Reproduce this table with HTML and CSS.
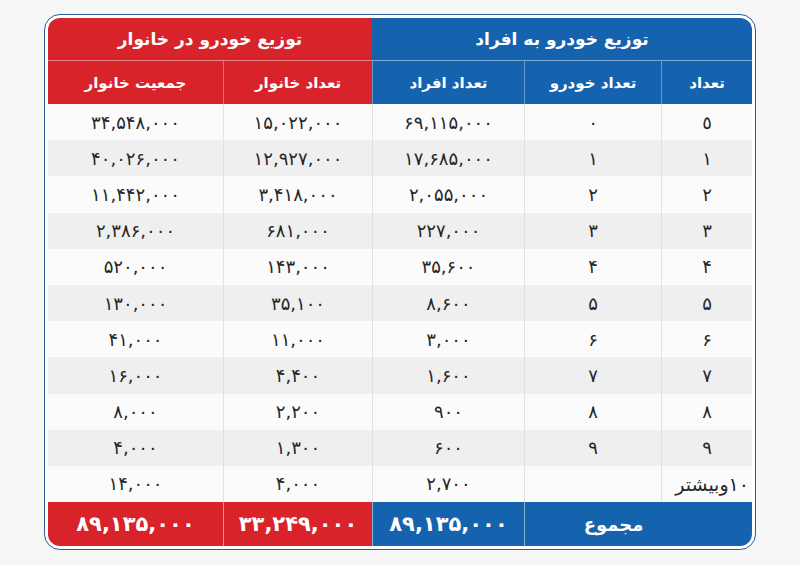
FILE: index.html
```html
<!DOCTYPE html>
<html lang="fa">
<head>
<meta charset="utf-8">
<link rel="stylesheet" href="styles.css">
</head>
<body>
<div class="card">
  <table class="grid" dir="rtl">
    <colgroup>
      <col class="c1"><col class="c2"><col class="c3"><col class="c4"><col class="c5">
    </colgroup>
    <thead>
      <tr class="h1">
        <th colspan="3" class="blue">توزیع خودرو به افراد</th>
        <th colspan="2" class="red">توزیع خودرو در خانوار</th>
      </tr>
      <tr class="h2">
        <th class="blue">تعداد</th>
        <th class="blue">تعداد خودرو</th>
        <th class="blue">تعداد افراد</th>
        <th class="red">تعداد خانوار</th>
        <th class="red">جمعیت خانوار</th>
      </tr>
    </thead>
    <tbody>
      <tr><td class="zero">٥</td><td>۰</td><td>۶۹,۱۱۵,۰۰۰</td><td>۱۵,۰۲۲,۰۰۰</td><td>۳۴,۵۴۸,۰۰۰</td></tr>
      <tr><td>۱</td><td>۱</td><td>۱۷,۶۸۵,۰۰۰</td><td>۱۲,۹۲۷,۰۰۰</td><td>۴۰,۰۲۶,۰۰۰</td></tr>
      <tr><td>۲</td><td>۲</td><td>۲,۰۵۵,۰۰۰</td><td>۳,۴۱۸,۰۰۰</td><td>۱۱,۴۴۲,۰۰۰</td></tr>
      <tr><td>۳</td><td>۳</td><td>۲۲۷,۰۰۰</td><td>۶۸۱,۰۰۰</td><td>۲,۳۸۶,۰۰۰</td></tr>
      <tr><td>۴</td><td>۴</td><td>۳۵,۶۰۰</td><td>۱۴۳,۰۰۰</td><td>۵۲۰,۰۰۰</td></tr>
      <tr><td>۵</td><td>۵</td><td>۸,۶۰۰</td><td>۳۵,۱۰۰</td><td>۱۳۰,۰۰۰</td></tr>
      <tr><td>۶</td><td>۶</td><td>۳,۰۰۰</td><td>۱۱,۰۰۰</td><td>۴۱,۰۰۰</td></tr>
      <tr><td>۷</td><td>۷</td><td>۱,۶۰۰</td><td>۴,۴۰۰</td><td>۱۶,۰۰۰</td></tr>
      <tr><td>۸</td><td>۸</td><td>۹۰۰</td><td>۲,۲۰۰</td><td>۸,۰۰۰</td></tr>
      <tr><td>۹</td><td>۹</td><td>۶۰۰</td><td>۱,۳۰۰</td><td>۴,۰۰۰</td></tr>
      <tr><td class="more">۱۰وبیشتر</td><td></td><td>۲,۷۰۰</td><td>۴,۰۰۰</td><td>۱۴,۰۰۰</td></tr>
    </tbody>
    <tfoot>
      <tr>
        <td colspan="2" class="blue label">مجموع</td>
        <td class="blue">۸۹,۱۳۵,۰۰۰</td>
        <td class="red">۳۳,۲۴۹,۰۰۰</td>
        <td class="red">۸۹,۱۳۵,۰۰۰</td>
      </tr>
    </tfoot>
  </table>
</div>
</body>
</html>
```
FILE: styles.css
```css
html, body {
  margin: 0;
  padding: 0;
  background: #f6f6f6;
}
body {
  padding: 14px 0 0 44px;
  font-family: "DejaVu Sans", "Noto Sans", sans-serif;
}
.card {
  width: 704px;
  padding: 3px;
  border: 1.5px solid #2d5c96;
  border-radius: 16px;
  background: #ffffff;
  box-sizing: content-box;
}
.grid {
  width: 704px;
  table-layout: fixed;
  border-collapse: separate;
  border-spacing: 0;
  border-radius: 12px;
  overflow: hidden;
  direction: rtl;
}
.c1 { width: 91px; }
.c2 { width: 137px; }
.c3 { width: 152px; }
.c4 { width: 149px; }
.c5 { width: 175px; }

th, td {
  padding: 0;
  text-align: center;
  vertical-align: middle;
}
.blue { background: #1562ae; color: #fff; }
.red { background: #d9232a; color: #fff; }

.h1 th {
  height: 42px;
  font-size: 17px;
  font-weight: bold;
  border-bottom: 1px solid rgba(255, 255, 255, 0.45);
}
.h2 th {
  height: 43px;
  font-size: 15px;
  font-weight: bold;
  border-left: 1px solid rgba(255, 255, 255, 0.35);
}
.h2 th:last-child { border-left: none; }
.h1 th:first-child { border-left: none; }

tbody td {
  height: 36.2px;
  font-size: 18px;
  color: #262626;
  letter-spacing: 3px;
  border-left: 1px solid #e2e2e2;
}
tbody td:last-child { border-left: none; }
tbody tr:nth-child(odd) td { background: #fbfbfb; }
tbody tr:nth-child(even) td { background: #efefef; }
.more { letter-spacing: 0; font-size: 19px; text-align: right; padding-right: 3px; }

tfoot td {
  height: 44px;
  font-size: 21px;
  font-weight: bold;
  letter-spacing: 1.5px;
  border-left: 1px solid rgba(255, 255, 255, 0.5);
}
tfoot td:last-child { border-left: none; }
tfoot .label { padding-right: 50px; font-size: 18px; letter-spacing: 0; }
```
